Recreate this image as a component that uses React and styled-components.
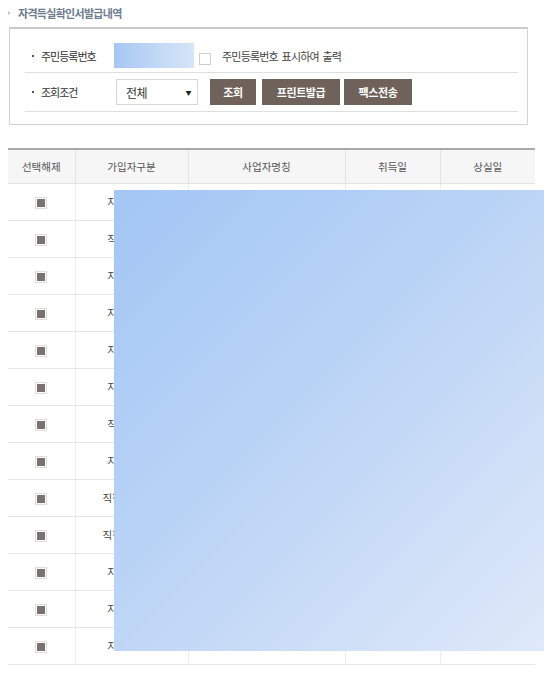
import React from "react";
import styled, { createGlobalStyle } from "styled-components";

const Global = createGlobalStyle`
  html, body { margin: 0; padding: 0; background: #fff; }
  body { font-family: "Noto Sans CJK KR", "Noto Sans", sans-serif; color: #444; }
  * { box-sizing: border-box; }
`;

const Page = styled.div`
  width: 555px;
  padding: 0 20px 0 8px;
`;

const TitleRow = styled.div`
  display: flex;
  align-items: center;
  height: 27px;
`;

const TitleMark = styled.span`
  width: 0;
  height: 0;
  border-top: 2.5px solid transparent;
  border-bottom: 2.5px solid transparent;
  border-left: 3px solid #c4c8cc;
  margin: 0 7px 2px 0;
`;

const Title = styled.h1`
  margin: -2px 0 0;
  font-size: 11px;
  font-weight: 700;
  color: #6d7d8f;
  letter-spacing: -0.7px;
  line-height: 14px;
`;

const SearchBox = styled.div`
  margin-left: 1px;
  width: 519px;
  border: 1px solid #d3d3d3;
  border-top: 2px solid #c9c9c9;
  padding: 12px 9px 12px 15px;
`;

const SearchRow = styled.div`
  display: flex;
  align-items: center;
  padding: ${(p) => p.$pad};
  border-bottom: 1px solid #dedede;
`;

const Label = styled.div`
  width: ${(p) => p.$w}px;
  display: flex;
  align-items: center;
  font-size: 11px;
  color: #333;
  letter-spacing: -1px;
  line-height: 14px;
  &::before {
    content: "";
    width: 2px;
    height: 2px;
    background: #555;
    margin: 0 7px 0 7px;
  }
`;

const ColorInput = styled.div`
  width: 80px;
  height: 25px;
  background: linear-gradient(90deg, #a7c7f3 0%, #c4daf6 60%, #d6e5f8 100%);
`;

const CheckBox = styled.span`
  width: 12px;
  height: 12px;
  border: 1px solid #cfcfcf;
  background: #fff;
  margin: 6px 0 0 5px;
`;

const CheckLabel = styled.span`
  margin-left: 11px;
  font-size: 11px;
  letter-spacing: -0.8px;
  word-spacing: 2px;
  color: #444;
  line-height: 14px;
`;

const Select = styled.div`
  width: 82px;
  height: 26px;
  border: 1px solid #d6d6d6;
  display: flex;
  align-items: center;
  justify-content: space-between;
  padding: 0 6px 0 9px;
  font-size: 12px;
  color: #333;
  letter-spacing: -0.5px;
`;

const Arrow = styled.span`
  font-size: 6px;
  color: #222;
  margin-top: 1px;
`;

const Button = styled.button`
  width: ${(p) => p.$w}px;
  height: 26px;
  padding: 0;
  margin-left: ${(p) => p.$ml}px;
  background: #6f625b;
  color: #fff;
  border: 0;
  font-family: inherit;
  font-size: 11px;
  font-weight: 700;
  letter-spacing: -0.4px;
  line-height: 26px;
`;

const TableWrap = styled.div`
  position: relative;
  margin-top: 23px;
  width: 527px;
`;

const Table = styled.table`
  width: 527px;
  border-collapse: collapse;
  table-layout: fixed;
  border-top: 2px solid #a9a9a9;
`;

const Th = styled.th`
  height: 34px;
  background: #f6f6f6;
  font-weight: 400;
  font-size: 10.5px;
  color: #555;
  border-left: 1px solid #e2e2e2;
  border-bottom: 1px solid #e2e2e2;
  &:first-child { border-left: 0; }
  padding: 0;
`;

const Td = styled.td`
  height: 37px;
  text-align: center;
  font-size: 10.5px;
  color: #444;
  border-left: 1px solid #ececec;
  border-bottom: 1px solid #e6e6e6;
  &:first-child { border-left: 0; }
  padding: 0;
  white-space: nowrap;
  overflow: hidden;
`;

const Mark = styled.span`
  display: inline-block;
  vertical-align: middle;
  width: 12px;
  height: 12px;
  border: 1px solid #e0dcdc;
  padding: 1px;
  &::after {
    content: "";
    display: block;
    width: 8px;
    height: 8px;
    background: #7a7171;
  }
`;

const Faint = styled.span`
  color: #b8c6d8;
`;

const Redact = styled.div`
  position: absolute;
  left: 106px;
  top: 42px;
  width: 430px;
  height: 461px;
  background: linear-gradient(135deg, #a3c6f4 0%, #b7d2f6 40%, #cbddf7 70%, #dfe9f9 100%);
`;

const rows = [
  "지역가입자",
  "직장가입자",
  "지역가입자",
  "지역가입자",
  "지역가입자",
  "지역가입자",
  "직장가입자",
  "지역가입자",
  "직장피부양자",
  "직장피부양자",
  "지역가입자",
  "지역가입자",
  "지역가입자",
];

export default function App() {
  return (
    <Page>
      <Global />
      <TitleRow>
        <TitleMark />
        <Title>자격득실확인서발급내역</Title>
      </TitleRow>
      <SearchBox>
        <SearchRow $pad="2px 0 4px">
          <Label $w={89}>주민등록번호</Label>
          <ColorInput />
          <CheckBox />
          <CheckLabel>주민등록번호 표시하여 출력</CheckLabel>
        </SearchRow>
        <SearchRow $pad="6px 0 6px">
          <Label $w={91}>조회조건</Label>
          <Select>
            <span>전체</span>
            <Arrow>▼</Arrow>
          </Select>
          <Button $w={46} $ml={12}>조회</Button>
          <Button $w={78} $ml={6}>프린트발급</Button>
          <Button $w={68} $ml={4}>팩스전송</Button>
        </SearchRow>
      </SearchBox>
      <TableWrap>
        <Table>
          <colgroup>
            <col style={{ width: 67 }} />
            <col style={{ width: 113 }} />
            <col style={{ width: 157 }} />
            <col style={{ width: 95 }} />
            <col style={{ width: 95 }} />
          </colgroup>
          <thead>
            <tr>
              <Th>선택해제</Th>
              <Th>가입자구분</Th>
              <Th>사업자명칭</Th>
              <Th>취득일</Th>
              <Th>상실일</Th>
            </tr>
          </thead>
          <tbody>
            {rows.map((r, i) => (
              <tr key={i}>
                <Td><Mark /></Td>
                <Td>{r}</Td>
                <Td>{i === 1 ? <Faint>주식회사</Faint> : ""}</Td>
                <Td>{i === 0 ? <Faint>2000.00.00</Faint> : ""}</Td>
                <Td></Td>
              </tr>
            ))}
          </tbody>
        </Table>
        <Redact />
      </TableWrap>
    </Page>
  );
}
